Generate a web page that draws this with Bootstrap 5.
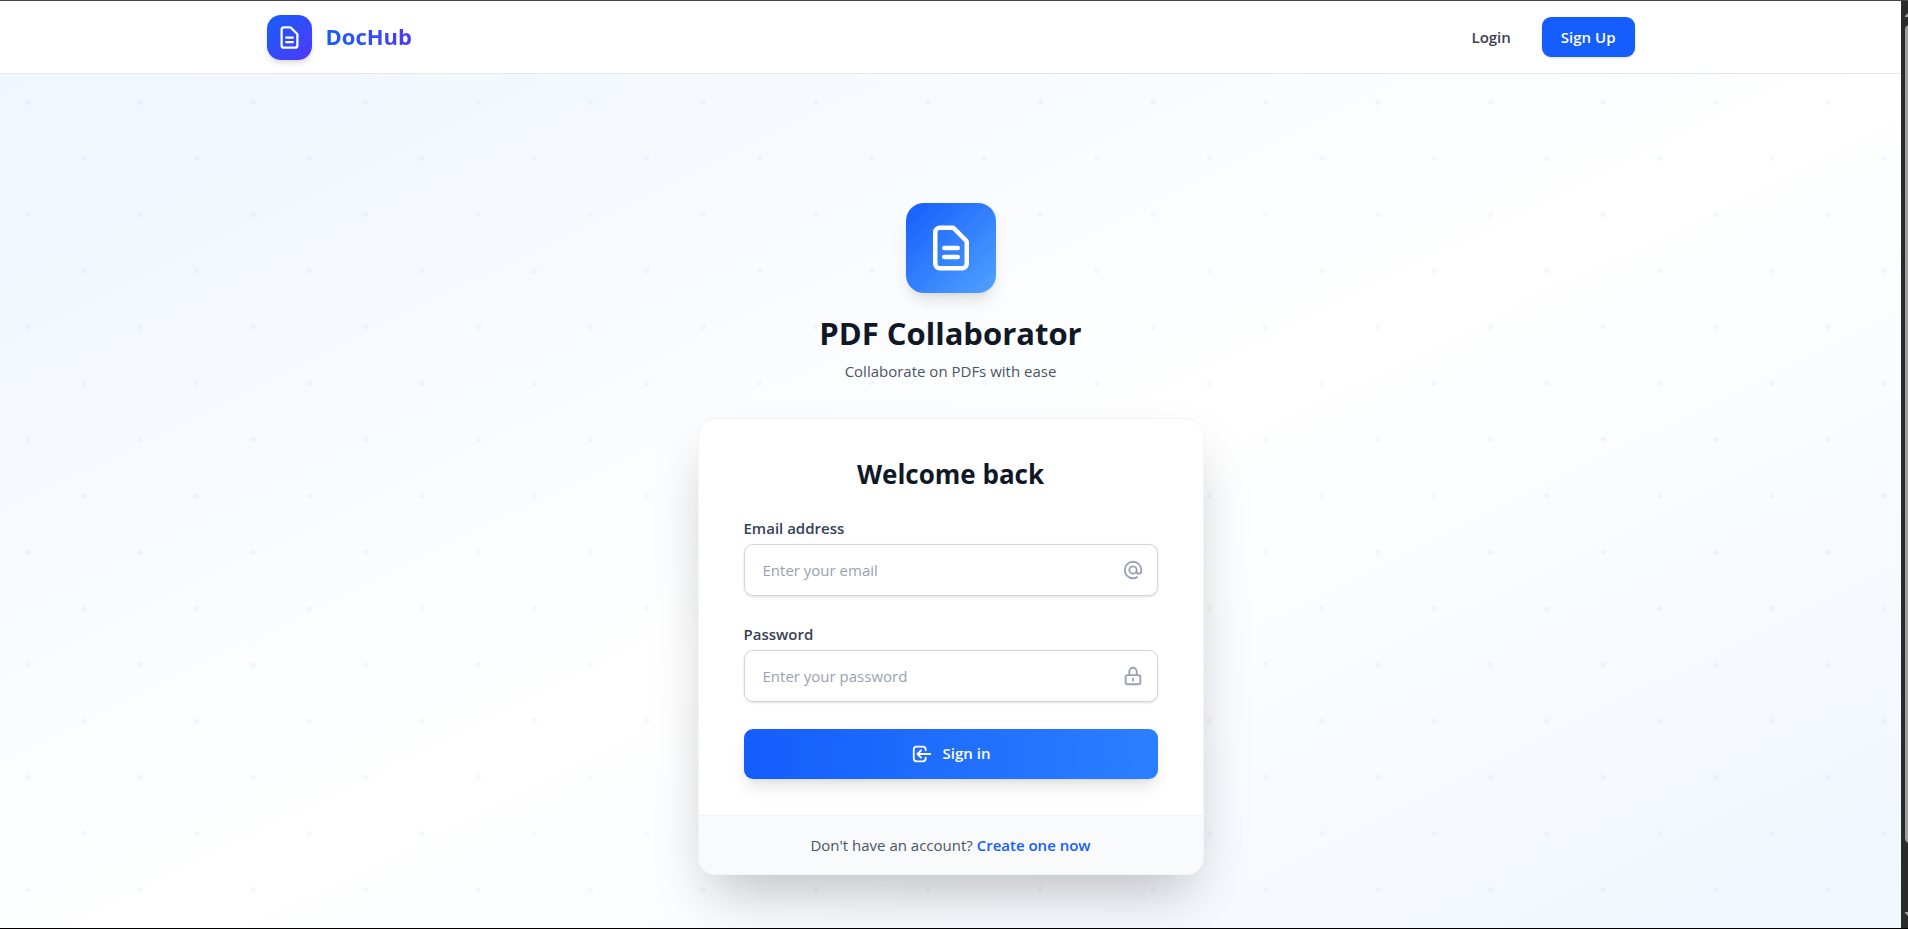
<!DOCTYPE html>
<html lang="en">
<head>
<meta charset="utf-8">
<meta name="viewport" content="width=device-width, initial-scale=1">
<title>DocHub – Sign in</title>
<link href="https://cdn.jsdelivr.net/npm/bootstrap@5.3.0/dist/css/bootstrap.min.css" rel="stylesheet">
<style>
  body { font-family: "Open Sans", "Noto Sans", sans-serif; font-size: 15px; line-height: 22px; color: #101828; background: #000; }
  .window-shell { height: 100vh; border-top: 1px solid #464646; border-bottom: 1px solid #000; overflow: hidden; }
  .page-view { min-width: 0; overflow: hidden; background: #fff; }

  /* scroll rail at the window edge */
  .scroll-rail { width: 7px; background: #2b2b2b; overflow: hidden; padding: 9px 0 9px 3px; }
  .scroll-rail svg { display: block; width: 14px; height: 7px; fill: #a0a0a0; }
  .scroll-thumb { width: 9px; height: 90%; margin: 8px 0 auto 1px; border-radius: 5px; background: #9f9f9f; }

  .site-header { background: #fff; border-bottom: 1px solid #e5e7eb; }
  .site-bar { max-width: 1440px; height: 72px; padding: 0 36px; }
  .brand-link { gap: 14px; }
  .brand-tile { width: 45px; height: 45px; border-radius: 14px; color: #fff; background: linear-gradient(to bottom right, #155dfc, #4f39f6); box-shadow: 0 4px 7px -1px rgba(0,0,0,.12), 0 2px 4px -2px rgba(0,0,0,.1); }
  .brand-name { font-size: 22px; line-height: 32px; font-weight: 700; padding-bottom: 2px; background: linear-gradient(to right, #155dfc, #4f39f6); -webkit-background-clip: text; background-clip: text; color: transparent; }
  .account-links { gap: 18px; }
  .login-link { color: #364153; font-weight: 600; padding: 9px 13px; }
  .signup-btn { background: #155dfc; color: #fff; font-size: 15px; line-height: 22px; font-weight: 600; border: 0; border-radius: 9px; padding: 9px 19px; box-shadow: 0 1px 3px rgba(0,0,0,.1), 0 1px 2px -1px rgba(0,0,0,.1); }

  .auth-stage { min-height: 100vh; padding: 54px 18px; background:
    url("data:image/svg+xml,%3Csvg xmlns='http://www.w3.org/2000/svg' viewBox='0 0 200 200'%3E%3Cg fill='%233b82f6' fill-opacity='.06'%3E%3Ccircle cx='25' cy='25' r='2.3'/%3E%3Ccircle cx='75' cy='75' r='2.3'/%3E%3Ccircle cx='125' cy='25' r='2.3'/%3E%3Ccircle cx='175' cy='75' r='2.3'/%3E%3Ccircle cx='25' cy='125' r='2.3'/%3E%3Ccircle cx='75' cy='175' r='2.3'/%3E%3Ccircle cx='125' cy='125' r='2.3'/%3E%3Ccircle cx='175' cy='175' r='2.3'/%3E%3C/g%3E%3C/svg%3E") 0 0 / 225px 225px,
    linear-gradient(to bottom right, #eff6ff, #fff 50%, #eff6ff); }
  .auth-column { width: 100%; max-width: 506px; }
  .hero-tile { width: 90px; height: 90px; border-radius: 18px; color: #fff; background: linear-gradient(to bottom right, #155dfc, #51a2ff); box-shadow: 0 11px 17px -3px rgba(0,0,0,.1), 0 4px 7px -4px rgba(0,0,0,.1); }
  .hero-title { font-size: 31px; line-height: 44px; font-weight: 700; margin: 18px 0 5px; }
  .hero-note { color: #4a5565; margin-bottom: 36px; }

  .auth-card { border: 1px solid #f3f4f6; border-radius: 18px; overflow: hidden; background: rgba(255,255,255,.9); box-shadow: 0 28px 56px -13px rgba(0,0,0,.25); }
  .auth-form { padding: 36px 45px; }
  .form-title { font-size: 26px; line-height: 38px; font-weight: 700; margin-bottom: 24px; }
  .field-group + .field-group, .signin-btn { margin-top: 27px; }
  .field-label { color: #364153; font-weight: 600; margin-bottom: 5px; line-height: 22px; }
  .field-input.form-control { height: 52px; font-size: 15px; padding: 12px 54px 12px 18px; color: #101828; border: 1px solid #d1d5dc; border-radius: 9px; background: rgba(255,255,255,.5); box-shadow: 0 1px 3px rgba(0,0,0,.1), 0 1px 2px -1px rgba(0,0,0,.1); }
  .field-input.form-control::placeholder { color: #99a1af; }
  .field-icon { position: absolute; right: 14px; top: 0; height: 100%; color: #99a1af; pointer-events: none; }
  .signin-btn { height: 50px; gap: 10px; color: #fff; font-size: 15px; font-weight: 600; border: 0; border-radius: 9px; background: linear-gradient(to right, #155dfc, #2b7fff); box-shadow: 0 11px 17px -3px rgba(0,0,0,.1), 0 4px 7px -4px rgba(0,0,0,.1); }
  .auth-foot { padding: 18px 45px; border-top: 1px solid #f3f4f6; background: #f9fafb; color: #4a5565; }
  .auth-foot a { color: #155dfc; font-weight: 600; }
  .line-icon { fill: none; stroke: currentColor; stroke-width: 2; stroke-linecap: round; stroke-linejoin: round; flex: none; }
</style>
</head>
<body>
<div class="window-shell d-flex">
  <div class="page-view flex-grow-1">
    <header class="site-header">
      <nav class="site-bar mx-auto d-flex align-items-center justify-content-between" aria-label="Main">
        <a href="#" class="brand-link d-flex align-items-center text-decoration-none">
          <span class="brand-tile d-flex align-items-center justify-content-center">
            <svg class="line-icon" width="27" height="27" viewBox="0 0 24 24" aria-hidden="true"><path d="M9 12h6m-6 4h6m2 5H7a2 2 0 01-2-2V5a2 2 0 012-2h5.586a1 1 0 01.707.293l5.414 5.414a1 1 0 01.293.707V19a2 2 0 01-2 2z"/></svg>
          </span>
          <span class="brand-name">DocHub</span>
        </a>
        <div class="account-links d-flex align-items-center">
          <a href="#" class="login-link text-decoration-none">Login</a>
          <button type="button" class="btn signup-btn">Sign Up</button>
        </div>
      </nav>
    </header>

    <main class="auth-stage d-flex align-items-center justify-content-center">
      <div class="auth-column">
        <div class="text-center">
          <div class="hero-tile mx-auto d-flex align-items-center justify-content-center">
            <svg class="line-icon" width="54" height="54" viewBox="0 0 24 24" aria-hidden="true"><path d="M9 12h6m-6 4h6m2 5H7a2 2 0 01-2-2V5a2 2 0 012-2h5.586a1 1 0 01.707.293l5.414 5.414a1 1 0 01.293.707V19a2 2 0 01-2 2z"/></svg>
          </div>
          <h1 class="hero-title">PDF Collaborator</h1>
          <p class="hero-note">Collaborate on PDFs with ease</p>
        </div>

        <div class="auth-card">
          <form class="auth-form">
            <h2 class="form-title text-center">Welcome back</h2>
            <div class="field-group">
              <label for="email" class="field-label d-block">Email address</label>
              <div class="position-relative">
                <input type="email" id="email" class="form-control field-input" placeholder="Enter your email">
                <span class="field-icon d-flex align-items-center"><svg class="line-icon" width="22" height="22" viewBox="0 0 24 24" aria-hidden="true"><path d="M16 12a4 4 0 10-8 0 4 4 0 008 0zm0 0v1.5a2.5 2.5 0 005 0V12a9 9 0 10-9 9m4.5-1.206a8.959 8.959 0 01-4.5 1.207"/></svg></span>
              </div>
            </div>
            <div class="field-group">
              <label for="password" class="field-label d-block">Password</label>
              <div class="position-relative">
                <input type="password" id="password" class="form-control field-input" placeholder="Enter your password">
                <span class="field-icon d-flex align-items-center"><svg class="line-icon" width="22" height="22" viewBox="0 0 24 24" aria-hidden="true"><path d="M12 15v2m-6 4h12a2 2 0 002-2v-6a2 2 0 00-2-2H6a2 2 0 00-2 2v6a2 2 0 002 2zm10-10V7a4 4 0 00-8 0v4h8z"/></svg></span>
              </div>
            </div>
            <button type="submit" class="btn signin-btn w-100 d-flex align-items-center justify-content-center">
              <svg class="line-icon" width="22" height="22" viewBox="0 0 24 24" aria-hidden="true"><path d="M11 16l-4-4m0 0l4-4m-4 4h14m-5 4v1a3 3 0 01-3 3H6a3 3 0 01-3-3V7a3 3 0 013-3h7a3 3 0 013 3v1"/></svg>
              Sign in
            </button>
          </form>
          <div class="auth-foot text-center">Don't have an account? <a href="#" class="text-decoration-none">Create one now</a></div>
        </div>
      </div>
    </main>
  </div>
  <div class="scroll-rail d-flex flex-column flex-shrink-0" aria-hidden="true">
    <svg viewBox="0 0 14 7"><path d="M7 0l6 6a1 1 0 0 1-1 1H1a1 1 0 0 1 0-1z"/></svg>
    <div class="scroll-thumb"></div>
    <svg viewBox="0 0 14 7"><path d="M7 7l6-6a1 1 0 0 0-1-1H1a1 1 0 0 0 0 1z"/></svg>
  </div>
</div>
<script src="https://cdn.jsdelivr.net/npm/bootstrap@5.3.0/dist/js/bootstrap.bundle.min.js"></script>
</body>
</html>
